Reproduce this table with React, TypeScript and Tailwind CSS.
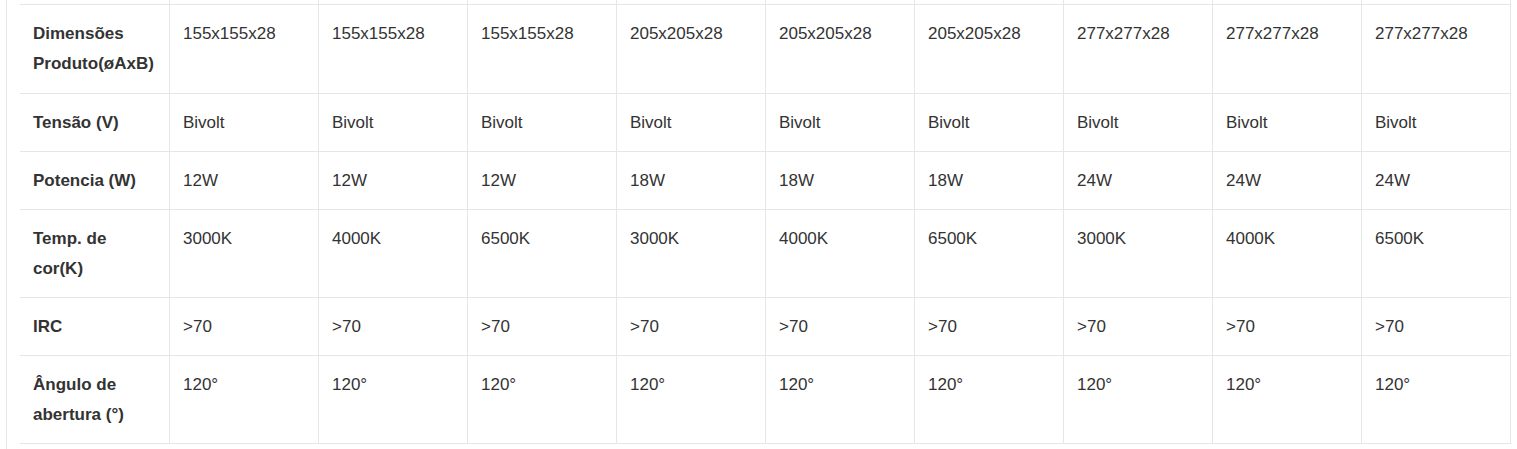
import React from 'react';

const rows: { label: string; values: string[] }[] = [
  {
    label: 'Dimensões Produto(øAxB)',
    values: ['155x155x28', '155x155x28', '155x155x28', '205x205x28', '205x205x28', '205x205x28', '277x277x28', '277x277x28', '277x277x28'],
  },
  { label: 'Tensão (V)', values: Array(9).fill('Bivolt') },
  { label: 'Potencia (W)', values: ['12W', '12W', '12W', '18W', '18W', '18W', '24W', '24W', '24W'] },
  {
    label: 'Temp. de cor(K)',
    values: ['3000K', '4000K', '6500K', '3000K', '4000K', '6500K', '3000K', '4000K', '6500K'],
  },
  { label: 'IRC', values: Array(9).fill('>70') },
  { label: 'Ângulo de abertura (°)', values: Array(9).fill('120°') },
];

const App: React.FC = () => {
  return (
    <div className="min-h-screen bg-white font-['Liberation_Sans',Arial,sans-serif] text-[17px] leading-[30px] text-[#333]">
      <div className="ml-[6px] min-h-screen border-l border-[#e6e6e6] pl-[13px]">
        <div className="grid w-[1491px] grid-cols-[150px_repeat(9,149px)]">
          {/* tail of the previous row, cut off at the top */}
          {Array.from({ length: 10 }).map((_, i) => (
            <div key={`top-${i}`} className="h-[5px] border-r border-b border-[#e6e6e6]" />
          ))}

          {rows.map((row, r) => {
            const pad = r === 0 ? 'pt-[14px] pb-[14px]' : 'pt-[14px] pb-[13px]';
            return (
              <React.Fragment key={row.label}>
                <div className={`border-r border-b border-[#e6e6e6] pl-[13px] pr-[12px] font-bold ${pad}`}>
                  {row.label}
                </div>
                {row.values.map((v, i) => (
                  <div key={i} className={`border-r border-b border-[#e6e6e6] pl-[13px] pr-[12px] ${pad}`}>
                    {v}
                  </div>
                ))}
              </React.Fragment>
            );
          })}
        </div>
      </div>
    </div>
  );
};

export default App;
